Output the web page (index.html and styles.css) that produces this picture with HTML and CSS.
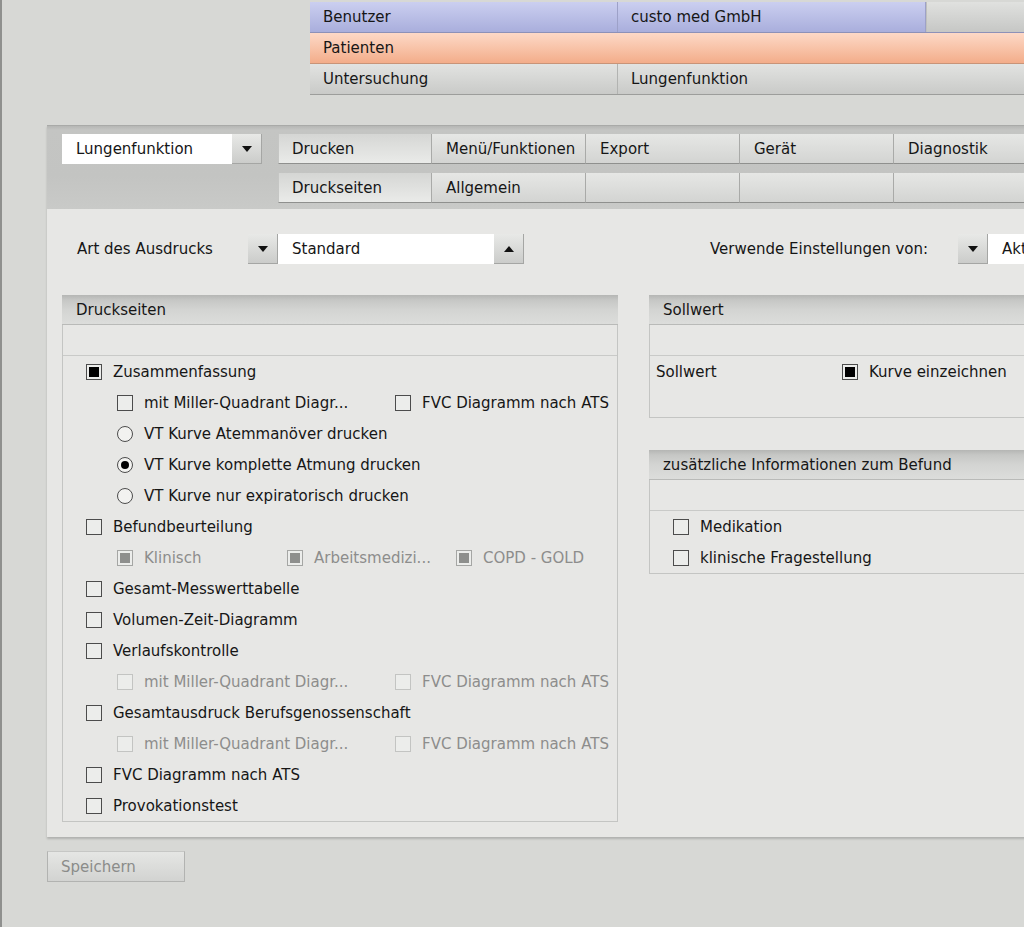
FILE: index.html
```html
<!DOCTYPE html>
<html lang="de">
<head>
<meta charset="utf-8">
<title>Druckseiten</title>
<link rel="stylesheet" href="styles.css">
</head>
<body>
<div class="page">
  <div class="topbar">
    <div class="trow blue">
      <div class="tcell">Benutzer</div>
      <div class="tcell">custo med GmbH</div>
      <div class="tcell rest"></div>
    </div>
    <div class="trow orange">
      <div class="tcell">Patienten</div>
      <div class="tcell wide"></div>
    </div>
    <div class="trow grey">
      <div class="tcell">Untersuchung</div>
      <div class="tcell wide">Lungenfunktion</div>
    </div>
  </div>

  <div class="panel">
    <div class="panel-head">
      <div class="combo">
        <div class="combo-field">Lungenfunktion</div>
        <div class="arrow-btn"><span class="tri-down"></span></div>
      </div>
      <div class="tabs">
        <div class="tab active">Drucken</div>
        <div class="tab">Menü/Funktionen</div>
        <div class="tab">Export</div>
        <div class="tab">Gerät</div>
        <div class="tab last">Diagnostik</div>
        <div class="tab active">Druckseiten</div>
        <div class="tab">Allgemein</div>
        <div class="tab"></div>
        <div class="tab"></div>
        <div class="tab last"></div>
      </div>
    </div>

    <div class="panel-body">
      <div class="art-row">
        <div class="art-left">
          <span class="art-label">Art des Ausdrucks</span>
          <div class="select">
            <div class="arrow-btn"><span class="tri-down"></span></div>
            <div class="select-field">Standard</div>
            <div class="arrow-btn"><span class="tri-up"></span></div>
          </div>
        </div>
        <div class="art-right">
          <span class="art-label">Verwende Einstellungen von:</span>
          <div class="select">
            <div class="arrow-btn"><span class="tri-down"></span></div>
            <div class="select-field open">Aktuell</div>
          </div>
        </div>
      </div>

      <div class="columns">
        <div class="group left-group">
          <div class="group-head">Druckseiten</div>
          <div class="group-empty"></div>
          <div class="list">
            <div class="row"><span class="cb checked"></span><span class="lbl">Zusammenfassung</span></div>
            <div class="row sub">
              <div class="item w278"><span class="cb"></span><span class="lbl">mit Miller-Quadrant Diagr...</span></div>
              <div class="item"><span class="cb"></span><span class="lbl">FVC Diagramm nach ATS</span></div>
            </div>
            <div class="row sub"><span class="rb"></span><span class="lbl">VT Kurve Atemmanöver drucken</span></div>
            <div class="row sub"><span class="rb on"></span><span class="lbl">VT Kurve komplette Atmung drucken</span></div>
            <div class="row sub"><span class="rb"></span><span class="lbl">VT Kurve nur expiratorisch drucken</span></div>
            <div class="row"><span class="cb"></span><span class="lbl">Befundbeurteilung</span></div>
            <div class="row sub disabled">
              <div class="item w170"><span class="cb checked"></span><span class="lbl">Klinisch</span></div>
              <div class="item w169"><span class="cb checked"></span><span class="lbl">Arbeitsmedizi...</span></div>
              <div class="item"><span class="cb checked"></span><span class="lbl">COPD - GOLD</span></div>
            </div>
            <div class="row"><span class="cb"></span><span class="lbl">Gesamt-Messwerttabelle</span></div>
            <div class="row"><span class="cb"></span><span class="lbl">Volumen-Zeit-Diagramm</span></div>
            <div class="row"><span class="cb"></span><span class="lbl">Verlaufskontrolle</span></div>
            <div class="row sub disabled">
              <div class="item w278"><span class="cb"></span><span class="lbl">mit Miller-Quadrant Diagr...</span></div>
              <div class="item"><span class="cb"></span><span class="lbl">FVC Diagramm nach ATS</span></div>
            </div>
            <div class="row"><span class="cb"></span><span class="lbl">Gesamtausdruck Berufsgenossenschaft</span></div>
            <div class="row sub disabled">
              <div class="item w278"><span class="cb"></span><span class="lbl">mit Miller-Quadrant Diagr...</span></div>
              <div class="item"><span class="cb"></span><span class="lbl">FVC Diagramm nach ATS</span></div>
            </div>
            <div class="row"><span class="cb"></span><span class="lbl">FVC Diagramm nach ATS</span></div>
            <div class="row"><span class="cb"></span><span class="lbl">Provokationstest</span></div>
          </div>
        </div>

        <div class="right-col">
          <div class="group">
            <div class="group-head">Sollwert</div>
            <div class="group-empty"></div>
            <div class="soll-row">
              <span class="soll-label">Sollwert</span>
              <span class="cb checked"></span><span class="lbl">Kurve einzeichnen</span>
            </div>
          </div>
          <div class="group extra">
            <div class="group-head">zusätzliche Informationen zum Befund</div>
            <div class="group-empty"></div>
            <div class="list small">
              <div class="row"><span class="cb"></span><span class="lbl">Medikation</span></div>
              <div class="row"><span class="cb"></span><span class="lbl">klinische Fragestellung</span></div>
            </div>
          </div>
        </div>
      </div>
    </div>
  </div>

  <div class="save">Speichern</div>
</div>
</body>
</html>
```

FILE: styles.css
```css
html, body {
  margin: 0;
  padding: 0;
  overflow: hidden;
}
body {
  background: #d7d8d5;
  font-family: "DejaVu Sans", Verdana, sans-serif;
  font-size: 15px;
  color: #161616;
  width: 1024px;
  height: 927px;
  border-left: 2px solid #8f908e;
  box-sizing: border-box;
}
.page {
  width: 1200px;
  padding-top: 2px;
}

/* ---------- top info bar ---------- */
.topbar {
  margin-left: 308px;
  display: flex;
  flex-direction: column;
}
.trow {
  display: flex;
  height: 31px;
  box-sizing: border-box;
  border-bottom: 1px solid #a4a5a3;
}
.tcell {
  width: 308px;
  box-sizing: border-box;
  padding-left: 13px;
  display: flex;
  align-items: center;
  border-right: 1px solid #b2b3b1;
}
.tcell.rest, .tcell.wide { flex: 1; border-right: none; }
.blue {
  background: linear-gradient(#cbcff0, #a9aedc);
  border-bottom-color: #8d91b8;
}
.blue .tcell { border-right-color: #9da1c8; }
.blue .tcell.rest {
  background: linear-gradient(#e0e1df, #c6c7c5);
  border-left: 1px solid #bfc0be;
}
.orange {
  background: linear-gradient(#fdd9c7, #f3ad8a);
  border-bottom-color: #c89478;
}
.orange .tcell { border-right-color: transparent; }
.grey {
  background: linear-gradient(#e2e3e1, #c9cac8);
  border-bottom-color: #9c9d9b;
}

/* ---------- main panel ---------- */
.panel {
  margin-left: 45px;
  margin-top: 30px;
  width: 1120px;
  box-shadow: 0 2px 2px rgba(0, 0, 0, 0.18);
}
.panel-head {
  height: 84px;
  box-sizing: border-box;
  background: linear-gradient(#b6b7b5 0, #c4c5c3 4px, #c3c4c2 60%, #c9cac8 100%);
  border-top: 1px solid #a9aaa8;
  padding: 8px 0 0 15px;
  display: flex;
  align-items: flex-start;
  gap: 16px;
}
.combo {
  display: flex;
  height: 30px;
}
.combo-field {
  width: 170px;
  background: #ffffff;
  box-sizing: border-box;
  padding-left: 14px;
  display: flex;
  align-items: center;
}
.arrow-btn {
  width: 30px;
  height: 30px;
  box-sizing: border-box;
  background: linear-gradient(#e8e9e7, #cbccca);
  border-right: 1px solid #a5a6a4;
  border-bottom: 1px solid #a5a6a4;
  display: flex;
  align-items: center;
  justify-content: center;
  flex: none;
}
.tri-down, .tri-up {
  width: 0;
  height: 0;
  border-left: 5px solid transparent;
  border-right: 5px solid transparent;
}
.tri-down { border-top: 6px solid #111; }
.tri-up { border-bottom: 6px solid #111; }

.tabs {
  display: grid;
  grid-template-columns: repeat(5, 154px);
  grid-auto-rows: 30px;
  row-gap: 9px;
}
.tab {
  box-sizing: border-box;
  background: linear-gradient(#e6e7e5, #d3d4d2);
  border-right: 1px solid #a9aaa8;
  border-bottom: 1px solid #8f908e;
  padding-left: 14px;
  display: flex;
  align-items: center;
}
.tab.last { width: 260px; border-right: none; }
.tab.active {
  background: linear-gradient(#d5d6d4, #eaebe9);
  border-left: 1px solid #c5c6c4;
  padding-left: 13px;
}

.panel-body {
  background: #e7e7e5;
  padding: 25px 0 15px 15px;
}
.art-row {
  display: flex;
  align-items: center;
  height: 30px;
}
.art-left {
  width: 648px;
  flex: none;
  display: flex;
  align-items: center;
  padding-left: 15px;
  box-sizing: border-box;
}
.art-left .art-label { width: 171px; flex: none; }
.art-label { white-space: nowrap; }
.art-right {
  display: flex;
  align-items: center;
  gap: 30px;
  flex: none;
}
.select {
  display: flex;
  height: 30px;
}
.select-field {
  width: 216px;
  background: #ffffff;
  box-sizing: border-box;
  padding-left: 14px;
  display: flex;
  align-items: center;
}
.select-field.open { width: 220px; }

.columns {
  display: flex;
  gap: 31px;
  margin-top: 31px;
  align-items: flex-start;
}
.group {
  border: 1px solid #c4c5c3;
  border-top: none;
  background: #e7e7e5;
}
.left-group { width: 556px; box-sizing: border-box; flex: none; }
.right-col {
  flex: 1;
  display: flex;
  flex-direction: column;
  gap: 32px;
}
.group-head {
  height: 30px;
  box-sizing: border-box;
  background: linear-gradient(#b5b6b4 0, #c6c7c5 5px, #d3d4d2 50%, #dcdddb 100%);
  border-bottom: 1px solid #b9bab8;
  padding-left: 14px;
  display: flex;
  align-items: center;
  margin: 0 -1px;
}
.group-empty {
  height: 31px;
  box-sizing: border-box;
  border-bottom: 1px solid #c9cac8;
}
.row {
  height: 31px;
  display: flex;
  align-items: center;
  padding-left: 23px;
}
.row.sub { padding-left: 54px; }
.item {
  display: flex;
  align-items: center;
}
.w278 { width: 278px; }
.w170 { width: 170px; }
.w169 { width: 169px; }
.lbl { margin-left: 11px; white-space: nowrap; }

.cb {
  width: 16px;
  height: 16px;
  box-sizing: border-box;
  border: 1px solid #4c4c4c;
  background: #ecedeb;
  flex: none;
  position: relative;
}
.cb.checked::after {
  content: "";
  position: absolute;
  left: 2px;
  top: 2px;
  width: 10px;
  height: 10px;
  background: #000;
}
.rb {
  width: 16px;
  height: 16px;
  box-sizing: border-box;
  border: 1px solid #4c4c4c;
  border-radius: 50%;
  background: #f2f2f0;
  flex: none;
  position: relative;
}
.rb.on::after {
  content: "";
  position: absolute;
  left: 3px;
  top: 3px;
  width: 8px;
  height: 8px;
  border-radius: 50%;
  background: #000;
}
.disabled { color: #8d8d8c; }
.disabled .cb { border-color: #c3c4c2; }
.disabled .cb.checked { border-color: #a5a6a4; }
.disabled .cb.checked::after { background: #8e8f8d; }

.soll-row {
  height: 61px;
  display: flex;
  align-items: flex-start;
  padding-left: 6px;
  padding-top: 8px;
  box-sizing: border-box;
}
.soll-label { width: 186px; line-height: 16px; flex: none; }
.soll-row .lbl { line-height: 16px; }

.save {
  margin-left: 45px;
  margin-top: 14px;
  width: 138px;
  height: 31px;
  box-sizing: border-box;
  background: linear-gradient(#e5e6e4, #d2d3d1);
  border: 1px solid #b2b3b1;
  border-top-color: #c6c7c5;
  color: #8b8c8a;
  padding-left: 13px;
  display: flex;
  align-items: center;
}
```
